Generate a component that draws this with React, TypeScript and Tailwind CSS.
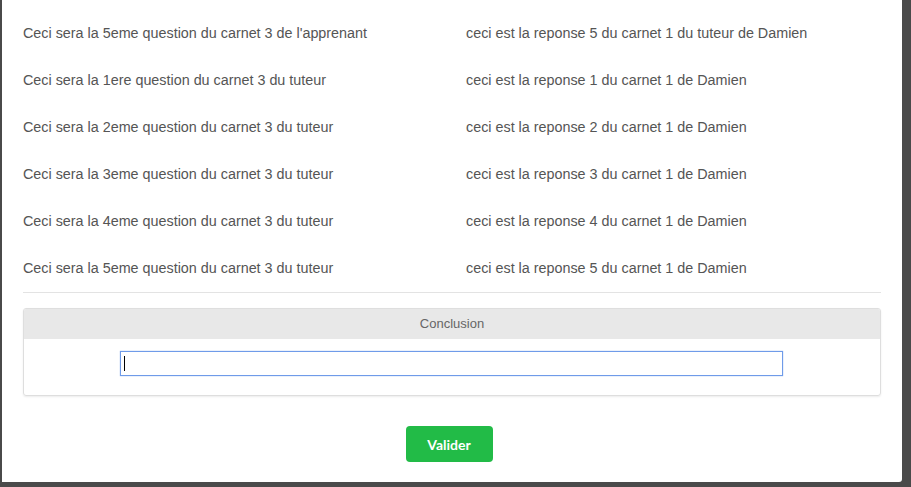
import React from "react";

const rows: [string, string][] = [
  ["Ceci sera la 5eme question du carnet 3 de l'apprenant", "ceci est la reponse 5 du carnet 1 du tuteur de Damien"],
  ["Ceci sera la 1ere question du carnet 3 du tuteur", "ceci est la reponse 1 du carnet 1 de Damien"],
  ["Ceci sera la 2eme question du carnet 3 du tuteur", "ceci est la reponse 2 du carnet 1 de Damien"],
  ["Ceci sera la 3eme question du carnet 3 du tuteur", "ceci est la reponse 3 du carnet 1 de Damien"],
  ["Ceci sera la 4eme question du carnet 3 du tuteur", "ceci est la reponse 4 du carnet 1 de Damien"],
  ["Ceci sera la 5eme question du carnet 3 du tuteur", "ceci est la reponse 5 du carnet 1 de Damien"],
];

export default function App() {
  return (
    <div className="w-[911px] h-[487px] bg-[#4a4a4a] pl-[2px] pr-[9px] pb-[5px] overflow-hidden" style={{ fontFamily: '"Liberation Sans", Arial, sans-serif' }}>
      <div className="h-full bg-white rounded-br-[3px] px-[21px] pt-[10px]">
        <div>
          {rows.map(([q, a], i) => (
            <div key={i} className="grid grid-cols-[443px_1fr] h-[47px] items-center text-[14.35px] text-[#555555]">
              <div>{q}</div>
              <div>{a}</div>
            </div>
          ))}
        </div>
        <div className="border-t border-[#e3e3e3]" />
        <div className="mt-[15px] border border-[#dedede] rounded-[3px] shadow-[0_1px_2px_rgba(0,0,0,0.08)] overflow-hidden">
          <div className="h-[30px] bg-[#e8e8e8] flex items-center justify-center text-[13px] text-[#666666]">Conclusion</div>
          <div className="h-[56px] flex justify-center pt-[12px] pr-[2px]">
            <div className="w-[663px] h-[25px] border border-[#6f9be9] shadow-[0_0_1px_rgba(111,155,233,0.8)] flex items-center pl-[3px]">
              <div className="w-px h-[15px] bg-black" />
            </div>
          </div>
        </div>
        <div className="flex justify-center mt-[30px] pr-[6px]">
          <button className="w-[87px] h-[36px] rounded-[4px] bg-[#22bb47] text-white font-bold text-[14px]" style={{ fontFamily: 'Lato, sans-serif' }}>Valider</button>
        </div>
      </div>
    </div>
  );
}
